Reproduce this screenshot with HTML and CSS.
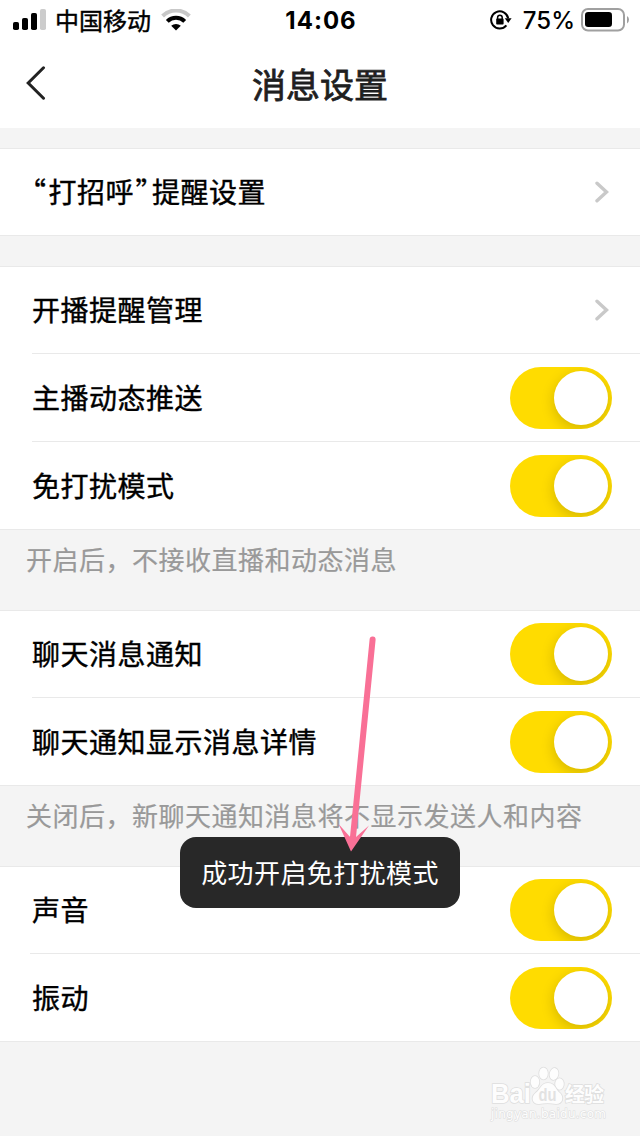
FILE: index.html
```
<!DOCTYPE html>
<html lang="zh-CN">
<head>
    <meta charset="UTF-8">
    <meta name="viewport" content="width=device-width, initial-scale=1.0">
    <title>消息设置</title>
    <link rel="stylesheet" href="styles.css">
</head>
<body>

<div class="screen">
    <!-- Status bar -->
    <div class="status-bar">
        <div class="status-left">
            <svg class="signal" width="34" height="22" viewBox="0 0 34 22">
                <rect x="0" y="13" width="6" height="8" rx="1.8" />
                <rect x="9" y="9" width="6" height="12" rx="1.8" />
                <rect x="18" y="4" width="6" height="17" rx="1.8" />
                <rect x="27" y="0" width="6" height="21" rx="1.8" fill="#cccccc" />
            </svg>
            <span class="carrier">中国移动</span>
            <svg class="wifi" width="30" height="22" viewBox="0 0 30 22" fill="none">
                <path d="M1.6 7 A19 19 0 0 1 28.4 7" stroke="#c8c8c8" stroke-width="4" />
                <path d="M6.3 12.4 A12.3 12.3 0 0 1 23.7 12.4" stroke="#000" stroke-width="4" />
                <path d="M10.2 16.8 A7 7 0 0 1 19.8 16.8 L15 21.6 Z" fill="#000" />
            </svg>
        </div>
        <div class="clock">14:06</div>
        <div class="status-right">
            <svg class="lock" width="22" height="20" viewBox="0 0 22 20" fill="none">
                <path d="M16.4 15.4 A8.6 8.6 0 1 1 18.2 8.4" stroke="#000" stroke-width="2" />
                <path d="M14.8 8.2 H21.6 L18.2 13 Z" fill="#000" />
                <rect x="6.2" y="8.6" width="7.4" height="6" rx="0.8" fill="#000" />
                <path d="M7.6 9 V7.6 A2.3 2.3 0 0 1 12.2 7.6 V9" stroke="#000" stroke-width="1.5" />
            </svg>
            <span class="percent">75%</span>
            <svg class="battery" width="48" height="24" viewBox="0 0 48 24">
                <rect x="1" y="1" width="42" height="21.5" rx="6" fill="none" stroke="#a0a0a0" stroke-width="2" />
                <rect x="4" y="4" width="27" height="15" rx="3.2" />
                <path d="M46 8 Q48 9 48 11.6 Q48 14.2 46 15.4 Z" fill="#a0a0a0" />
            </svg>
        </div>
    </div>

    <div class="nav">
        <svg class="back" width="20" height="34" viewBox="0 0 20 34">
            <path d="M17.5 1.8 L2.2 17 L17.5 32.2" fill="none" stroke="#222" stroke-width="3" stroke-linecap="round" />
        </svg>
        <h1 class="title">消息设置</h1>
    </div>

    <div class="group">
        <div class="row">
            <span class="label"><span class="quote-open">“</span>打招呼<span class="quote-close">”</span>提醒设置</span>
            <svg class="chevron" width="14" height="22" viewBox="0 0 14 22"><path d="M2 2.2 L11.5 11 L2 19.8" /></svg>
        </div>
    </div>

    <div class="group live">
        <div class="row">
            <span class="label">开播提醒管理</span>
            <svg class="chevron" width="14" height="22" viewBox="0 0 14 22"><path d="M2 2.2 L11.5 11 L2 19.8" /></svg>
        </div>
        <div class="row">
            <span class="label">主播动态推送</span>
            <div class="switch"><div class="knob"></div></div>
        </div>
        <div class="row">
            <span class="label">免打扰模式</span>
            <div class="switch"><div class="knob"></div></div>
        </div>
    </div>
    <p class="note">开启后，不接收直播和动态消息</p>

    <div class="group">
        <div class="row">
            <span class="label">聊天消息通知</span>
            <div class="switch"><div class="knob"></div></div>
        </div>
        <div class="row">
            <span class="label">聊天通知显示消息详情</span>
            <div class="switch"><div class="knob"></div></div>
        </div>
    </div>
    <p class="note">关闭后，新聊天通知消息将不显示发送人和内容</p>

    <div class="group sound">
        <div class="row">
            <span class="label">声音</span>
            <div class="switch"><div class="knob"></div></div>
        </div>
        <div class="row">
            <span class="label">振动</span>
            <div class="switch"><div class="knob"></div></div>
        </div>
    </div>

    <div class="toast">成功开启免打扰模式</div>

    <!-- Pointer arrow -->
    <svg class="arrow" width="44" height="220" viewBox="0 0 44 220">
        <path d="M36.6 6.6 L16.8 206" fill="none" stroke="#f97096" stroke-width="6" stroke-linecap="round" />
        <path d="M2.6 191 L13.6 203.5 L20 204 L33 192.5 L15 218.5 Z" fill="#f97096" />
    </svg>

    <!-- Watermark -->
    <svg class="watermark" width="130" height="64" viewBox="0 0 130 64">
        <g class="mark">
            <text class="mark-logo" x="5" y="43" textLength="40" lengthAdjust="spacingAndGlyphs">Bai</text>
            <ellipse cx="49" cy="22" rx="4.3" ry="6" />
            <ellipse cx="57.5" cy="13.5" rx="4.3" ry="6" />
            <ellipse cx="68" cy="14" rx="4.3" ry="6" transform="rotate(12 68 14)" />
            <ellipse cx="73.5" cy="24" rx="4.3" ry="5.8" />
            <path d="M62 23 C55 23 55 29 49.5 33 C44 38 47 44.5 53 44 C59 43 64 43 70 44 C77 44 78 37 74 33 C69 29 69 23 62 23 Z" />
            <text class="mark-du" x="52.5" y="41" textLength="18" lengthAdjust="spacingAndGlyphs">du</text>
            <text class="mark-cn" x="79" y="42" textLength="39">经验</text>
            <text class="mark-url" x="5" y="58" textLength="115">jingyan.baidu.com</text>
        </g>
    </svg>
</div>

</body>
</html>
```
FILE: styles.css
```
* {
    box-sizing: border-box;
}
body {
    margin: 0;
    background-color: #f4f4f4;
    font-family: "Noto Sans CJK SC", sans-serif;
    color: #000;
}
svg {
    display: block;
    flex: none;
}
.screen {
    position: relative;
    width: 640px;
    height: 1136px;
    overflow: hidden;
}
.status-bar {
    display: grid;
    grid-template-columns: 1fr auto 1fr;
    align-items: center;
    height: 40px;
    padding: 0 11px 0 13px;
    background-color: #fff;
}
.status-left,
.status-right {
    display: flex;
    align-items: center;
}
.status-right {
    justify-content: flex-end;
}
.carrier {
    margin: 0 10px 0 8px;
    font-size: 24px;
    line-height: 40px;
    -webkit-text-stroke: 0.4px #000;
}
.clock {
    font-family: Inter, sans-serif;
    font-size: 24px;
    font-weight: 700;
    letter-spacing: 1px;
}
.percent {
    margin: 0 6px 0 11px;
    font-family: Inter, sans-serif;
    font-size: 24px;
    font-weight: 500;
}
.nav {
    display: grid;
    grid-template-columns: 60px 1fr 60px;
    align-items: center;
    height: 88px;
    background-color: #fff;
}
.back {
    margin: 0 0 3px 26px;
}
.title {
    margin: 0;
    font-size: 34px;
    font-weight: 400;
    line-height: 86px;
    text-align: center;
    color: #1f1f1f;
    -webkit-text-stroke: 0.8px #1f1f1f;
}
.group {
    margin-top: 20px;
    border-top: 1px solid #e9e9e9;
    background-color: #fff;
}
.live {
    margin-top: 30px;
}
.row {
    display: flex;
    justify-content: space-between;
    height: 88px;
    margin-left: 32px;
    padding: 13px 28px 0 0;
    border-bottom: 1px solid #e9e9e9;
}
.row:first-child {
    height: 87px;
    padding-top: 12px;
}
.row:last-child {
    margin-left: 0;
    padding-left: 32px;
}
.sound .row:first-child {
    margin-left: 30px;
    padding-left: 2px;
}
.label {
    font-size: 28px;
    line-height: 60px;
    letter-spacing: 0.5px;
    -webkit-text-stroke: 0.4px #000;
}
/* half-width forms of the full-width quotes */
.quote-open,
.quote-close {
    font-feature-settings: "halt";
}
.quote-open {
    margin-right: 2px;
}
.quote-close {
    margin: 0 2px 0 1.5px;
}
.chevron {
    margin: 20px 3px 0 0;
    fill: none;
    stroke: #c9c9c9;
    stroke-width: 3.4;
    stroke-linecap: round;
}
.switch {
    width: 102px;
    height: 62px;
    padding: 4px;
    border-radius: 31px;
    background-color: #ffdc00;
    overflow: hidden;
}
.knob {
    width: 54px;
    height: 54px;
    margin-left: auto;
    border-radius: 50%;
    background-color: #fff;
    box-shadow: 0 4px 14px rgba(0, 0, 0, 0.18);
}
.note {
    height: 80px;
    margin: 0;
    padding-left: 26px;
    font-size: 26px;
    line-height: 58px;
    letter-spacing: 0.5px;
    white-space: nowrap;
    color: #999;
    -webkit-text-stroke: 0.2px #999;
}
.note + .group {
    margin-top: 0;
}
.toast {
    position: absolute;
    left: 180px;
    top: 837px;
    width: 280px;
    height: 71px;
    border-radius: 16px;
    background-color: #282828;
    color: #fff;
    font-size: 26px;
    line-height: 69px;
    letter-spacing: 0.4px;
    text-align: center;
}
.arrow {
    position: absolute;
    left: 336px;
    top: 633px;
}
.watermark {
    position: absolute;
    left: 486px;
    top: 1060px;
}
.mark {
    fill: #fdfdfd;
    stroke: #dedede;
    stroke-width: 1.6;
    paint-order: stroke;
    font-family: "Liberation Sans", sans-serif;
}
.mark-logo {
    font-size: 27px;
    font-weight: 700;
}
.mark-du {
    font-size: 18px;
    font-weight: 700;
    fill: #e2e2e2;
    stroke: none;
}
.mark-cn {
    font-family: "Noto Sans CJK SC", sans-serif;
    font-size: 20px;
    font-weight: 700;
}
.mark-url {
    font-family: "DejaVu Sans", sans-serif;
    font-size: 12px;
    stroke-width: 1.2;
}
```
